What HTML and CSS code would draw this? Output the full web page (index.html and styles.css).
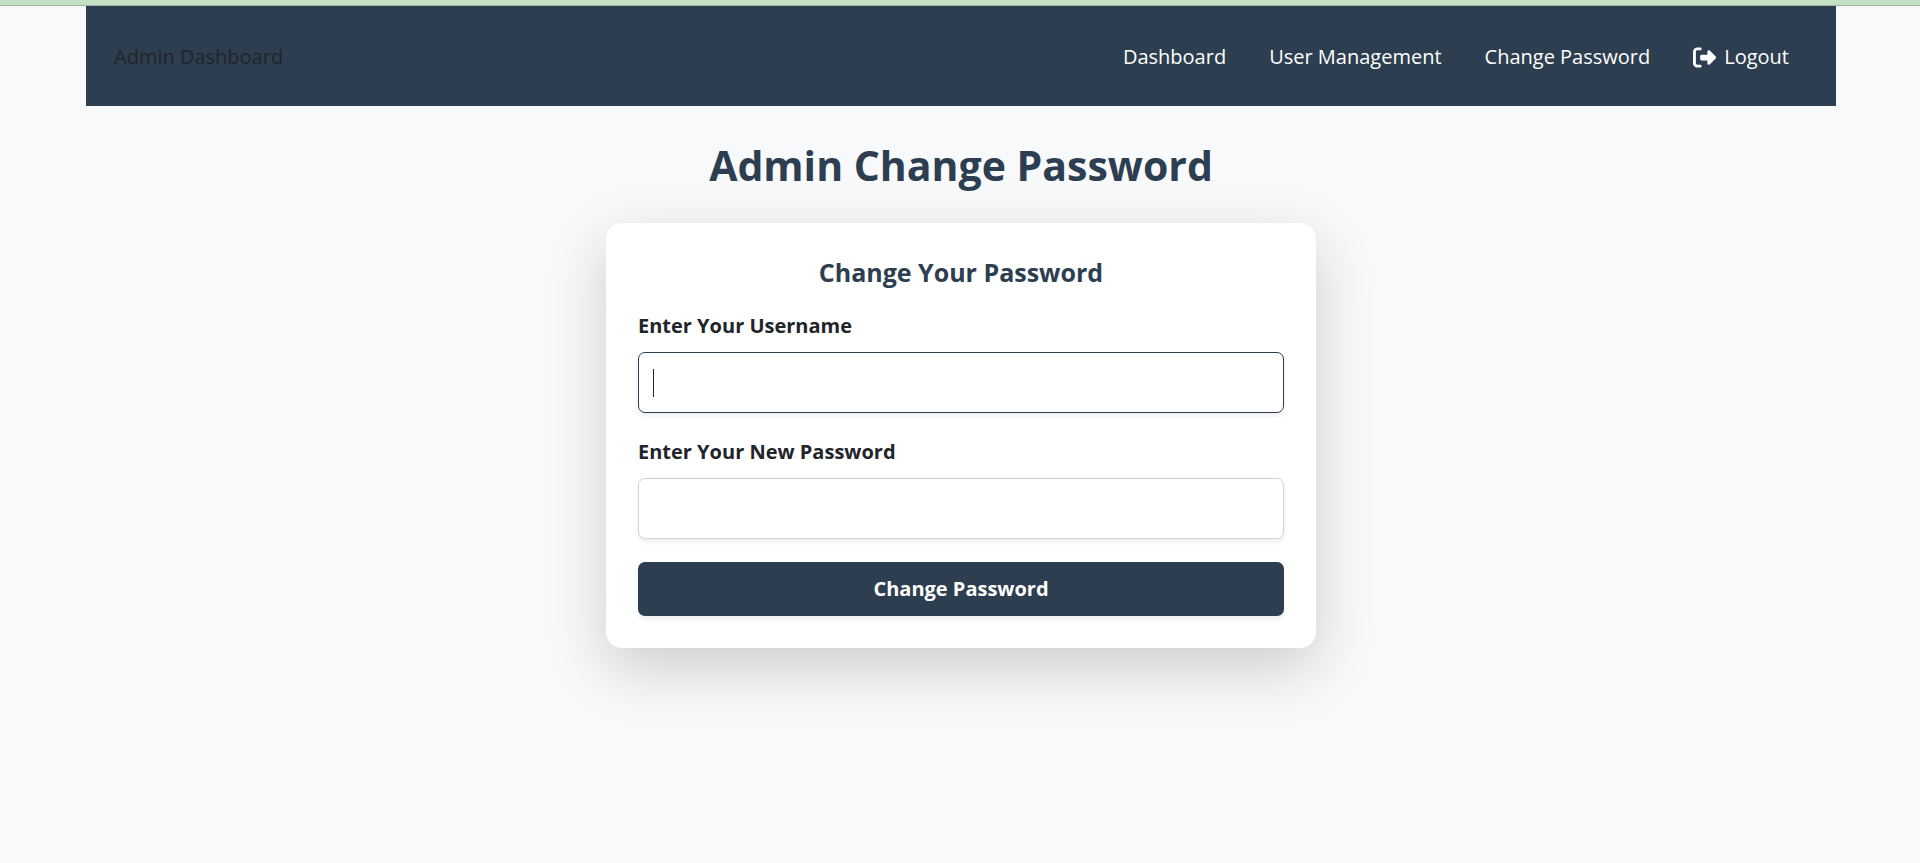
FILE: index.html
```html
<!DOCTYPE html>
<html lang="en">
<head>
<meta charset="utf-8">
<title>Admin Change Password</title>
<link rel="stylesheet" href="styles.css">
</head>
<body>
<div class="top-strip"></div>
<header class="navbar">
  <span class="brand">Admin Dashboard</span>
  <nav class="nav-links">
    <a href="#">Dashboard</a>
    <a href="#">User Management</a>
    <a href="#">Change Password</a>
    <a href="#" class="logout"><svg class="logout-icon" viewBox="0 0 512 512" aria-hidden="true"><path fill="currentColor" d="M377.900 105.900L500.700 228.700c7.200 7.200 11.300 17.100 11.300 27.300s-4.100 20.100-11.300 27.300L377.900 406.100c-6.400 6.400-15 9.900-24 9.900c-18.700 0-33.900-15.200-33.900-33.900l0-62.100-128 0c-17.700 0-32-14.300-32-32l0-64c0-17.700 14.300-32 32-32l128 0 0-62.100c0-18.700 15.200-33.900 33.900-33.900c9 0 17.600 3.600 24 9.900zM160 96L96 96c-17.700 0-32 14.300-32 32l0 256c0 17.700 14.300 32 32 32l64 0c17.700 0 32 14.300 32 32s-14.300 32-32 32l-64 0c-53 0-96-43-96-96L0 128C0 75 43 32 96 32l64 0c17.700 0 32 14.300 32 32s-14.300 32-32 32z"/></svg>Logout</a>
  </nav>
</header>
<main class="page">
  <h1 class="page-title">Admin Change Password</h1>
  <form class="card">
    <h2 class="card-title">Change Your Password</h2>
    <label class="label" for="username">Enter Your Username</label>
    <div class="field">
      <input class="input input-active" type="text" id="username">
      <span class="caret"></span>
    </div>
    <label class="label" for="password">Enter Your New Password</label>
    <div class="field">
      <input class="input" type="password" id="password">
    </div>
    <button class="submit" type="button">Change Password</button>
  </form>
</main>
</body>
</html>
```

FILE: styles.css
```css
* {
  box-sizing: border-box;
}

body {
  min-height: 100vh;
  margin: 0;
  background: #f8f9fb;
  color: #212529;
  font-family: "Segoe UI", "Open Sans", "Noto Sans", sans-serif;
  font-size: 20px;
  line-height: 32px;
}

.top-strip {
  height: 6px;
  background: #c5e1c5;
  border-bottom: 1px solid #9fb39f;
}

.navbar {
  display: flex;
  align-items: center;
  justify-content: space-between;
  margin: 0 84px 0 86px;
  padding: 35px 47px 33px 28px;
  background: #2c3e50;
}

.nav-links {
  display: flex;
  gap: 43px;
}

.nav-links a {
  color: #fff;
  text-decoration: none;
}

.logout {
  display: flex;
  align-items: center;
  gap: 8px;
}

.logout-icon {
  width: 23px;
  height: 23px;
}

.page {
  padding: 29px 19px 120px 21px;
}

.page-title {
  margin: 0 0 28px;
  color: #2c3e50;
  font-size: 41px;
  font-weight: 700;
  line-height: 60px;
  text-align: center;
}

.card {
  max-width: 710px;
  margin: 0 auto;
  padding: 32px;
  background: #fff;
  border-radius: 16px;
  box-shadow: 0 20px 60px rgba(0, 0, 0, 0.175);
}

.card-title {
  margin: 0 0 21px;
  color: #2c3e50;
  font-size: 25px;
  font-weight: 700;
  line-height: 34px;
  text-align: center;
}

.label {
  display: block;
  margin-bottom: 10px;
  font-weight: 700;
}

.field {
  position: relative;
  margin-bottom: 23px;
}

.input {
  display: block;
  width: 100%;
  height: 61px;
  padding: 15px;
  border: 1px solid #ced4da;
  border-radius: 7px;
  background: #fff;
  color: inherit;
  font: inherit;
  box-shadow: 0 3px 5px rgba(0, 0, 0, 0.075);
}

.input-active {
  border-color: #2c3e50;
}

.caret {
  position: absolute;
  top: 17px;
  left: 15px;
  width: 1px;
  height: 28px;
  background: #212529;
}

.submit {
  display: block;
  width: 100%;
  padding: 11px;
  border: 0;
  border-radius: 7px;
  background: #2c3e50;
  color: #fff;
  font: inherit;
  font-weight: 700;
  box-shadow: 0 3px 5px rgba(0, 0, 0, 0.075);
}
```
